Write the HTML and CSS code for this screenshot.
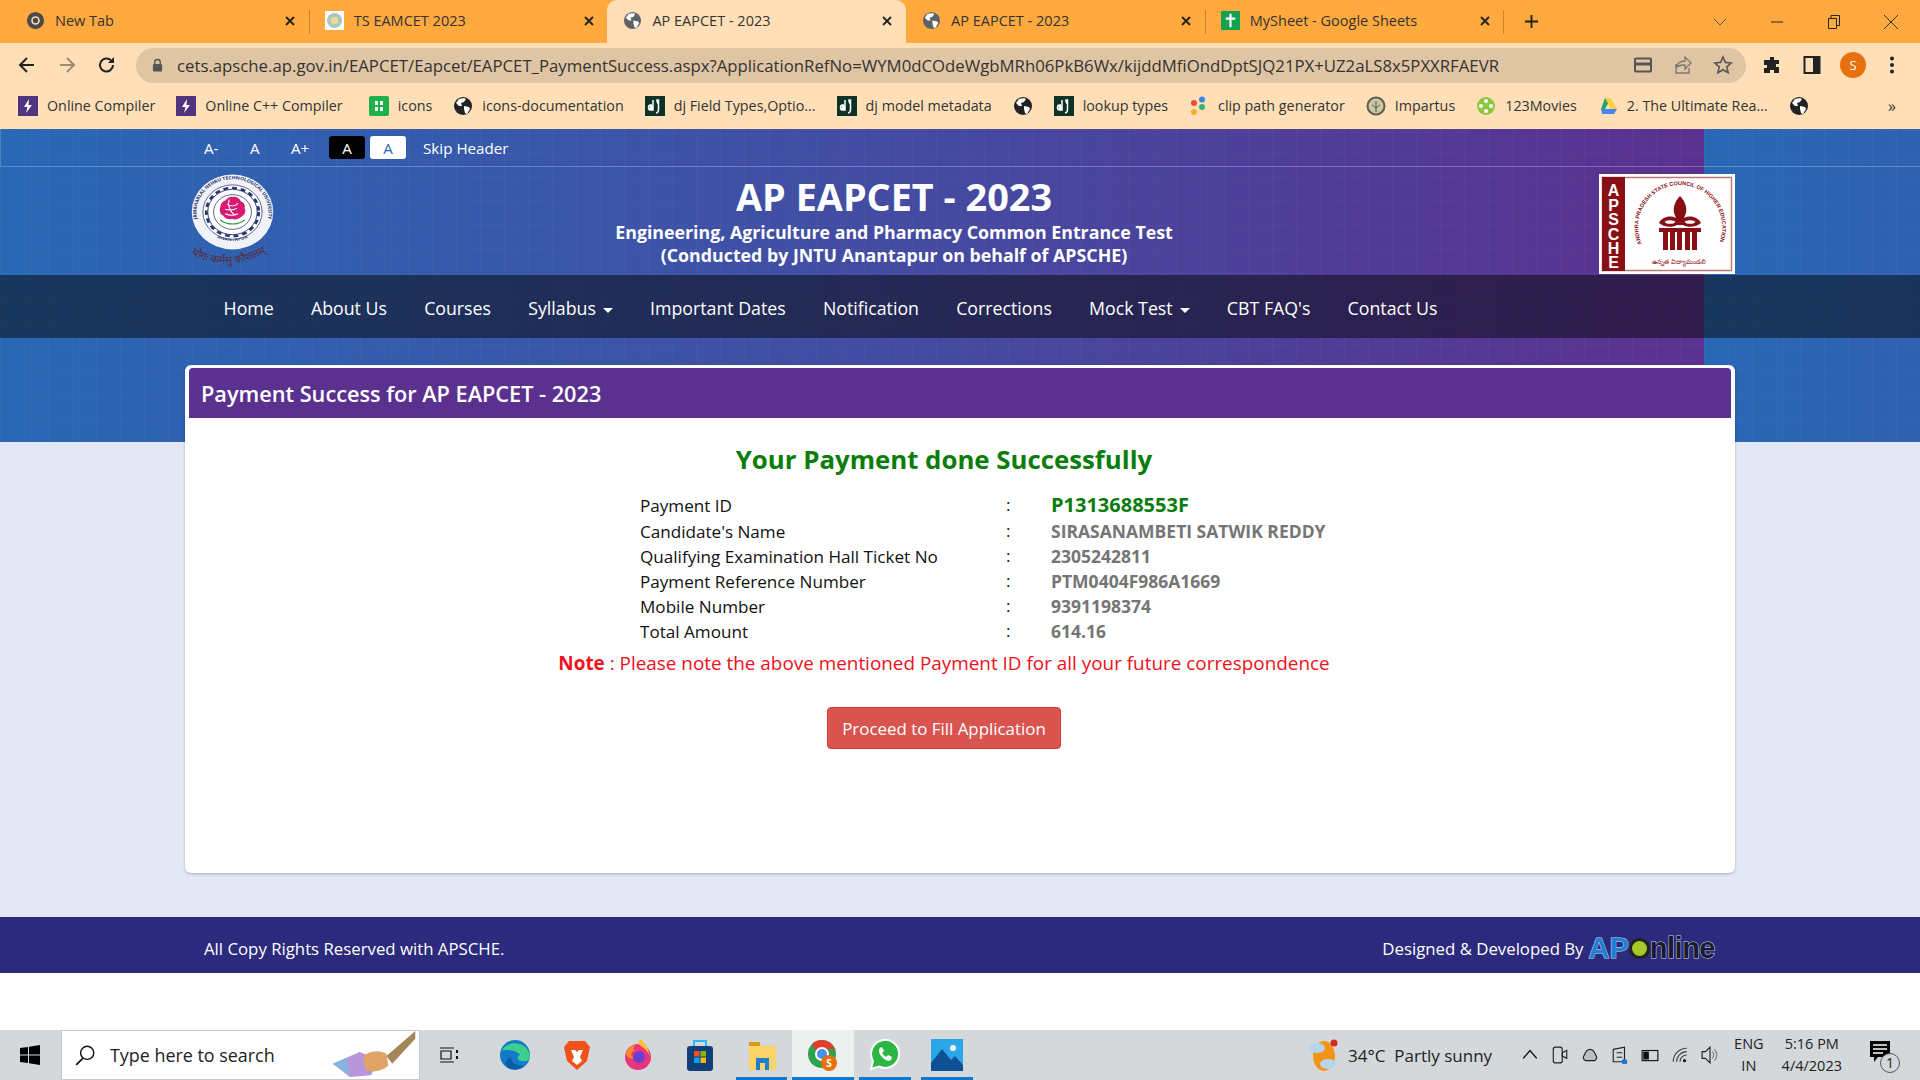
FILE: index.html
```html
<!DOCTYPE html>
<html lang="en">
<head>
    <meta charset="UTF-8">
    <title>AP EAPCET - 2023</title>
    <link rel="stylesheet" href="styles.css">
</head>
<body>
    <svg class="defs" width="0" height="0">
        <symbol id="globe" viewBox="0 0 20 20">
            <circle cx="10" cy="10" r="9" fill="currentColor"/>
            <path d="M6 3c3-1 6-1 7 0l-2 3-3 1 1 3-3 0-3-3zM11 10l5 1 1 2-3 5-2-1-1-4z" fill="#fff"/>
        </symbol>
        <symbol id="bolt" viewBox="0 0 20 20">
            <rect width="20" height="20" fill="#50357e"/>
            <path d="M11 3 6 11h3.500L8 17l6-8h-3.500z" fill="#fff"/>
        </symbol>
        <symbol id="dj" viewBox="0 0 20 20">
            <rect width="20" height="20" fill="#0c3326"/>
            <path d="M8 4v10H5.500C4 14 3.500 13 3.500 11.500S4 9 5.500 9H7M6.500 10.500h-1v2h1zM12 4h1.500v1.500H12zM12 7h1.500v7c0 1.500-.5 2.500-2.500 3" fill="none" stroke="#fff" stroke-width="1.500"/>
        </symbol>
        <symbol id="close" viewBox="0 0 12 12">
            <path d="M2 2l8 8M10 2l-8 8" stroke="#222" stroke-width="1.800" fill="none"/>
        </symbol>
    </svg>

    <div class="tabstrip">
        <div class="tab">
            <svg class="favicon" viewBox="0 0 20 20"><circle cx="10" cy="10" r="9" fill="#4a4a4a"/><circle cx="10" cy="10" r="4.500" fill="#ffdfb8"/><circle cx="10" cy="10" r="2.800" fill="#4a4a4a"/></svg>
            <span class="tab-title">New Tab</span>
            <svg class="tab-close"><use href="#close"/></svg>
        </div>
        <div class="tab tab-sep">
            <svg class="favicon" viewBox="0 0 20 20"><rect width="20" height="20" fill="#fff"/><circle cx="10" cy="10" r="8" fill="#a9c9b8"/><circle cx="10" cy="10" r="4" fill="#e8d9a0"/></svg>
            <span class="tab-title">TS EAMCET 2023</span>
            <svg class="tab-close"><use href="#close"/></svg>
        </div>
        <div class="tab tab-active">
            <svg class="favicon globe-grey"><use href="#globe"/></svg>
            <span class="tab-title">AP EAPCET - 2023</span>
            <svg class="tab-close"><use href="#close"/></svg>
        </div>
        <div class="tab">
            <svg class="favicon globe-grey"><use href="#globe"/></svg>
            <span class="tab-title">AP EAPCET - 2023</span>
            <svg class="tab-close"><use href="#close"/></svg>
        </div>
        <div class="tab tab-sep tab-end">
            <svg class="favicon" viewBox="0 0 20 20"><rect width="20" height="20" rx="1" fill="#12a150"/><path d="M10 3v14M5 8h10" stroke="#fff" stroke-width="2.200"/></svg>
            <span class="tab-title">MySheet - Google Sheets</span>
            <svg class="tab-close"><use href="#close"/></svg>
        </div>
        <svg class="new-tab" viewBox="0 0 16 16"><path d="M8 1v14M1 8h14" stroke="#222" stroke-width="2"/></svg>
        <div class="win-controls">
            <svg class="win-btn win-chevron" viewBox="0 0 14 14"><path d="M1 4l6 6 6-6" fill="none" stroke="#555"/></svg>
            <svg class="win-btn win-min" viewBox="0 0 14 14"><path d="M1 7h12" stroke="#222"/></svg>
            <svg class="win-btn win-max" viewBox="0 0 14 14"><path d="M1.500 3.500h8v10h-8zM4 3.500V.5h8.500v10H9.500" fill="none" stroke="#222"/></svg>
            <svg class="win-btn win-x" viewBox="0 0 14 14"><path d="M0 0l14 14M14 0L0 14" stroke="#333"/></svg>
        </div>
    </div>

    <div class="toolbar">
        <svg class="nav-icon" viewBox="0 0 20 20"><path d="M17 10H4M10 3l-7 7 7 7" fill="none" stroke="#222" stroke-width="2"/></svg>
        <svg class="nav-icon" viewBox="0 0 20 20"><path d="M3 10h13M10 3l7 7-7 7" fill="none" stroke="#9a8a76" stroke-width="2"/></svg>
        <svg class="nav-icon" viewBox="0 0 20 20"><path d="M16 10a6.500 6.500 0 1 1-2-4.700" fill="none" stroke="#222" stroke-width="2"/><path d="M17 2v6h-6z" fill="#222"/></svg>
        <div class="omnibox">
            <svg class="lock" viewBox="0 0 12 14"><path d="M3 6V4a3 3 0 0 1 6 0v2" fill="none" stroke="#555" stroke-width="1.500"/><rect x="1" y="6" width="10" height="8" rx="1" fill="#555"/></svg>
            <span class="url">cets.apsche.ap.gov.in/EAPCET/Eapcet/EAPCET_PaymentSuccess.aspx?ApplicationRefNo=WYM0dCOdeWgbMRh06PkB6Wx/kijddMfiOndDptSJQ21PX+UZ2aLS8x5PXXRFAEVR</span>
            <svg class="omni-icon" viewBox="0 0 20 20"><rect x="2" y="3.500" width="16" height="13" rx="1" fill="none" stroke="#555" stroke-width="2"/><path d="M2 9h16" stroke="#555" stroke-width="3"/></svg>
            <svg class="omni-icon" viewBox="0 0 20 20"><path d="M3 9v9h13v-5M3 13c1-5 5-7 9-7V2l6 6-6 6v-4c-4 0-7 0-9 3z" fill="none" stroke="#777" stroke-width="1.300"/></svg>
            <svg class="omni-icon" viewBox="0 0 20 20"><path d="M10 2l2.400 5.400 5.800.6-4.400 3.900 1.300 5.800-5.100-3-5.100 3 1.300-5.800L1.800 8l5.800-.6z" fill="none" stroke="#555" stroke-width="1.600"/></svg>
        </div>
        <svg class="tool-icon" viewBox="0 0 20 20"><path d="M8 2h4v3h5v4h-3v3h3v6h-5v-3H8v3H2v-5h3v-3H2V5h6z" fill="#222"/></svg>
        <svg class="tool-icon" viewBox="0 0 20 20"><rect x="2.500" y="2" width="15" height="16" fill="none" stroke="#222" stroke-width="2"/><rect x="11" y="2" width="7" height="16" fill="#222"/></svg>
        <span class="avatar">S</span>
        <svg class="tool-icon tool-menu" viewBox="0 0 20 20"><circle cx="10" cy="3.500" r="2" fill="#222"/><circle cx="10" cy="10" r="2" fill="#222"/><circle cx="10" cy="16.500" r="2" fill="#222"/></svg>
    </div>

    <div class="bookmarks">
        <span class="bm"><svg class="bm-icon"><use href="#bolt"/></svg>Online Compiler</span>
        <span class="bm bm-wide"><svg class="bm-icon"><use href="#bolt"/></svg>Online C++ Compiler</span>
        <span class="bm"><svg class="bm-icon" viewBox="0 0 20 20"><rect width="20" height="20" rx="2" fill="#1eb04a"/><path d="M6 5h3v4H6zM11 5h3v4h-3zM6 11h3v4H6zM11 11h3v4h-3z" fill="#fff"/></svg>icons</span>
        <span class="bm"><svg class="bm-icon"><use href="#globe"/></svg>icons-documentation</span>
        <span class="bm"><svg class="bm-icon"><use href="#dj"/></svg>dj Field Types,Optio...</span>
        <span class="bm"><svg class="bm-icon"><use href="#dj"/></svg>dj model metadata</span>
        <span class="bm bm-only"><svg class="bm-icon"><use href="#globe"/></svg></span>
        <span class="bm"><svg class="bm-icon"><use href="#dj"/></svg>lookup types</span>
        <span class="bm"><svg class="bm-icon" viewBox="0 0 20 20"><circle cx="13" cy="3.500" r="3" fill="#3a86e0"/><circle cx="5" cy="7" r="3" fill="#e8503a"/><circle cx="13" cy="11" r="3" fill="#37b26c"/><circle cx="5" cy="16" r="3" fill="#f4b12e"/></svg>clip path generator</span>
        <span class="bm"><svg class="bm-icon" viewBox="0 0 20 20"><circle cx="10" cy="10" r="8.500" fill="#c9c7a8" stroke="#5d5d45" stroke-width="2"/><path d="M10 5v11M6 9l4 3 4-3" stroke="#5d5d45" fill="none"/></svg>Impartus</span>
        <span class="bm"><svg class="bm-icon" viewBox="0 0 20 20"><circle cx="10" cy="10" r="9" fill="#8dc63f"/><circle cx="10" cy="5" r="2" fill="#fff"/><circle cx="10" cy="15" r="2" fill="#fff"/><circle cx="5" cy="10" r="2" fill="#fff"/><circle cx="15" cy="10" r="2" fill="#fff"/></svg>123Movies</span>
        <span class="bm"><svg class="bm-icon" viewBox="0 0 20 20"><path d="M7 2h6l-6 11-4 0z" fill="#1fa463"/><path d="M13 2l6 11h-6L7 2z" fill="#ffcf3f"/><path d="M19 13l-3 5H4l-1-5z" fill="#4285f4"/></svg>2. The Ultimate Rea...</span>
        <span class="bm bm-only"><svg class="bm-icon"><use href="#globe"/></svg></span>
        <span class="bm-more">»</span>
    </div>

    <div class="page">
        <div class="site">
            <div class="access-bar">
                <a class="access-item">A-</a>
                <a class="access-item">A</a>
                <a class="access-item">A+</a>
                <a class="access-box box-dark">A</a>
                <a class="access-box box-light">A</a>
                <a class="access-skip">Skip Header</a>
            </div>
            <header class="site-header">
                <svg class="jntu-logo" viewBox="0 0 85 102">
                    <defs>
                        <path id="seal-top" d="M16 68A37 37 0 1 1 69 68"/>
                        <path id="seal-bottom" d="M17 64A36 36 0 0 0 68 64"/>
                        <path id="seal-motto" d="M1 80q40 22 83-6"/>
                    </defs>
                    <g transform="translate(42.500 38) scale(.97 .89) translate(-42.500 -42)">
                        <circle cx="42.500" cy="42" r="42" fill="#f1f3f8"/>
                        <text class="seal-text"><textPath href="#seal-top" startOffset="50%" text-anchor="middle">JAWAHARLAL NEHRU TECHNOLOGICAL UNIVERSITY</textPath></text>
                        <text class="seal-text"><textPath href="#seal-bottom" startOffset="50%" text-anchor="middle">ANANTAPUR</textPath></text>
                        <circle cx="42.500" cy="42" r="30.500" fill="#fff" stroke="#26366e" stroke-width=".8"/>
                        <circle cx="42.500" cy="42" r="27" fill="none" stroke="#26366e" stroke-width="3" stroke-dasharray="5 4"/>
                        <circle cx="42.500" cy="42" r="25.500" fill="#fff" stroke="#26366e" stroke-width="1"/>
                        <circle cx="42.500" cy="42" r="19.500" fill="#fff" stroke="#26366e" stroke-width=".8"/>
                        <path d="M42 25c4-1 8 1 9 5 3 1 5 4 4 8 2 3 0 7-3 9-3 3-6 4-10 3-4 1-8-1-9-4-4-2-4-6-3-10 0-3 2-6 5-7 2-2 4-4 7-4z" fill="#d81b72"/>
                        <path d="M37 33c3 3 9 3 11-1M39 28c-2 6 1 13 5 17M47 38c-3 2-8 2-12 1M35 44c4 2 9 2 13 0" fill="none" stroke="#fff" stroke-width="1.100"/>
                        <path d="M30 51c7 6 18 6 25 0" fill="none" stroke="#2f9a4a" stroke-width="1.300"/>
                    </g>
                    <text class="seal-motto"><textPath href="#seal-motto">योगः कर्मसु कौशलम्</textPath></text>
                </svg>
                <div class="site-title">
                    <h1>AP EAPCET - 2023</h1>
                    <p>Engineering, Agriculture and Pharmacy Common Entrance Test</p>
                    <p>(Conducted by JNTU Anantapur on behalf of APSCHE)</p>
                </div>
                <svg class="apsche-logo" viewBox="0 0 136 100">
                    <defs>
                        <path id="council-arc" d="M49 80A42 42 0 1 1 115 78"/>
                    </defs>
                    <rect width="136" height="100" fill="#fff"/>
                    <rect x="3.500" y="3.500" width="129" height="93" fill="none" stroke="#b57d7d" stroke-width="1.500"/>
                    <rect x="3" y="3" width="23" height="94" fill="#8a0f14"/>
                    <text class="apsche-side" x="14.500" y="22">A</text>
                    <text class="apsche-side" x="14.500" y="37">P</text>
                    <text class="apsche-side" x="14.500" y="51">S</text>
                    <text class="apsche-side" x="14.500" y="66">C</text>
                    <text class="apsche-side" x="14.500" y="80">H</text>
                    <text class="apsche-side" x="14.500" y="94">E</text>
                    <text class="apsche-arc"><textPath href="#council-arc" startOffset="50%" text-anchor="middle">ANDHRA PRADESH STATE COUNCIL OF HIGHER EDUCATION</textPath></text>
                    <path d="M81 22c5 5 7 11 6 17l-2 5c6-3 14-1 17 5-4 4-13 5-18 2h-6c-5 3-14 2-18-2 3-6 11-8 17-5l-2-5c-1-6 1-12 6-17z" fill="#8a0f14"/>
                    <ellipse cx="71" cy="48" rx="5" ry="1.800" fill="#fff"/>
                    <ellipse cx="91" cy="48" rx="5" ry="1.800" fill="#fff"/>
                    <path d="M60 54h42v4h-4v18h-5V58h-2v18h-5V58h-3v18h-5V58h-2v18h-5V58h-2v18h-5V58h-4z" fill="#8a0f14"/>
                    <text class="apsche-telugu" x="80" y="90">ఉన్నత విద్యామండలి</text>
                </svg>
            </header>
            <nav class="site-nav">
                <a>Home</a>
                <a>About Us</a>
                <a>Courses</a>
                <a class="caret">Syllabus</a>
                <a>Important Dates</a>
                <a>Notification</a>
                <a>Corrections</a>
                <a class="caret">Mock Test</a>
                <a>CBT FAQ's</a>
                <a>Contact Us</a>
            </nav>
            <section class="card">
                <div class="card-head">Payment Success for AP EAPCET - 2023</div>
                <div class="card-body">
                    <h2>Your Payment done Successfully</h2>
                    <table class="details">
                        <tr class="row-first"><td>Payment ID</td><td>:</td><td class="val-id">P1313688553F</td></tr>
                        <tr><td>Candidate's Name</td><td>:</td><td class="val">SIRASANAMBETI SATWIK REDDY</td></tr>
                        <tr><td>Qualifying Examination Hall Ticket No</td><td>:</td><td class="val">2305242811</td></tr>
                        <tr><td>Payment Reference Number</td><td>:</td><td class="val">PTM0404F986A1669</td></tr>
                        <tr><td>Mobile Number</td><td>:</td><td class="val">9391198374</td></tr>
                        <tr><td>Total Amount</td><td>:</td><td class="val">614.16</td></tr>
                    </table>
                    <p class="note"><b>Note</b> : Please note the above mentioned Payment ID for all your future correspondence</p>
                    <button class="btn-proceed">Proceed to Fill Application</button>
                </div>
            </section>
            <footer class="site-footer">
                <span>All Copy Rights Reserved with APSCHE.</span>
                <span class="footer-right">Designed &amp; Developed By <span class="aponline">AP<i class="ap-dot"></i><em>nline</em></span></span>
            </footer>
        </div>
    </div>

    <div class="taskbar">
        <svg class="win-logo" viewBox="0 0 20 20"><path d="M0 3l8-1v7.500H0zM9 1.800 20 0v9.500H9zM0 10.500h8V18l-8-1zM9 10.500h11V20L9 18.200z" fill="#000"/></svg>
        <div class="search-box">
            <svg class="search-icon" viewBox="0 0 20 20"><circle cx="12" cy="8" r="6" fill="none" stroke="#111" stroke-width="1.300"/><path d="M8 13l-6 6" stroke="#111" stroke-width="1.500"/></svg>
            <span>Type here to search</span>
            <svg class="brush" viewBox="0 0 90 50"><path d="M2 34l28-12 20 8-8 16-22 2z" fill="#a77ad0" opacity=".8"/><path d="M2 34l14-6 4 18z" fill="#6fc2e0" opacity=".7"/><path d="M34 26c8-6 18-6 24-2l2 12c-6 6-18 8-24 4z" fill="#e0a468"/><path d="M58 26 88 0v8L64 34z" fill="#a58658"/></svg>
        </div>
        <svg class="task-view" viewBox="0 0 20 20"><path d="M1 3h14M1 17h14M2 6h10v8H2z" fill="none" stroke="#111" stroke-width="1.200"/><path d="M17 5h2v3h-2zM17 11h2v3h-2z" fill="#111"/></svg>
        <div class="task-app"><svg class="task-icon" viewBox="0 0 32 32"><circle cx="16" cy="16" r="15" fill="#1379c9"/><path d="M3 12C6 2 28 0 31 17c0 5-5 6-9 5-5-1-4-5-1-6-4-5-14-6-18-4z" fill="#3ccf8e"/><path d="M12 18c0 6 5 9 12 9-4 4-13 5-18-2 1-4 3-6 6-7z" fill="#0c59a4"/></svg></div>
        <div class="task-app"><svg class="task-icon" viewBox="0 0 32 32"><path d="M8 2h16l5 6-3 14-10 9-10-9L3 8z" fill="#f1511b"/><path d="M10 11h4l2 2 2-2h4l-3 7 2 4-5 4-5-4 2-4z" fill="#fff"/></svg></div>
        <div class="task-app"><svg class="task-icon" viewBox="0 0 32 32"><circle cx="16" cy="18" r="13" fill="#e9357a"/><path d="M16 5c5 3 12 8 12 15 0-7-5-18-10-20z" fill="#ffc02e"/><path d="M4 14c2-5 6-8 9-8-2 3-2 5 0 6-5 0-5 6 0 7-4 2-9-1-9-5z" fill="#ff8a1f"/><circle cx="17" cy="18" r="6" fill="#6b3fd1"/></svg></div>
        <div class="task-app"><svg class="task-icon" viewBox="0 0 32 32"><path d="M10 8V2h12v6" fill="none" stroke="#2db4f0" stroke-width="2"/><rect x="3" y="7" width="26" height="25" rx="3" fill="#123f7a"/><rect x="10" y="12" width="5.500" height="5.500" fill="#f25022"/><rect x="16.500" y="12" width="5.500" height="5.500" fill="#7fba00"/><rect x="10" y="18.500" width="5.500" height="5.500" fill="#00a4ef"/><rect x="16.500" y="18.500" width="5.500" height="5.500" fill="#ffb900"/></svg></div>
        <div class="task-app app-open"><svg class="task-icon" viewBox="0 0 32 32"><path d="M3 3h11v5H3z" fill="#d99a18"/><rect x="3" y="7" width="27" height="24" fill="#ffd466"/><path d="M10 31V19h13v12h-4v-7h-5v7z" fill="#1c7fd0"/></svg></div>
        <div class="task-app app-open app-active"><svg class="task-icon" viewBox="0 0 32 32"><circle cx="15" cy="15" r="14" fill="#2fa24f"/><path d="M15 1a14 14 0 0 1 13 9H15a5 5 0 0 0-5 3L5 5a14 14 0 0 1 10-4z" fill="#e33c31"/><circle cx="15" cy="15" r="6" fill="#4a8ff0" stroke="#fff" stroke-width="2"/><circle cx="22" cy="24" r="8" fill="#e8700d"/><text class="badge-s" x="22" y="28">S</text></svg></div>
        <div class="task-app app-open"><svg class="task-icon" viewBox="0 0 32 32"><path d="M2 30l2-8a14 14 0 1 1 6 5.500z" fill="#2bb741" stroke="#fff" stroke-width="2"/><path d="M11 9c-2 2-1 6 2 9s6 5 9 3l1-3-4-2-2 2c-2-1-3-3-4-4l2-2-2-4z" fill="#fff"/></svg></div>
        <div class="task-app app-open"><svg class="task-icon" viewBox="0 0 32 32"><rect width="32" height="32" fill="#2ba6e8"/><circle cx="22" cy="9" r="3" fill="#fff"/><path d="M0 24 11 10l9 11 4-4 8 9v6H0z" fill="#0f4f94"/></svg></div>
        <div class="tray">
            <svg class="weather" viewBox="0 0 30 34"><ellipse cx="15" cy="18" rx="11" ry="15" fill="#f29418"/><circle cx="25" cy="5" r="3.500" fill="#d42a20"/><ellipse cx="8" cy="10" rx="8" ry="5" fill="#b8d3ee"/><ellipse cx="19" cy="26" rx="8" ry="5" fill="#b8d3ee"/></svg>
            <span class="weather-text">34°C&nbsp; Partly sunny</span>
            <svg class="tray-icon tray-up" viewBox="0 0 16 16"><path d="M2 11l6-7 6 7" fill="none" stroke="#111" stroke-width="1.300"/></svg>
            <svg class="tray-icon" viewBox="0 0 16 16"><rect x="2" y="1" width="8" height="14" rx="2" fill="none" stroke="#222"/><path d="M10 6l4-2v7l-4-2z" fill="none" stroke="#222"/></svg>
            <svg class="tray-icon" viewBox="0 0 16 16"><path d="M4 13a3 3 0 0 1-1-5c1-3 3-5 5-5s4 2 5 5a3 3 0 0 1-1 5z" fill="#bdbdbd" stroke="#222"/></svg>
            <svg class="tray-icon" viewBox="0 0 16 16"><path d="M2 3l10-2v13H2z" fill="none" stroke="#222"/><path d="M5 6h5M5 10h5" stroke="#222"/><circle cx="12" cy="14" r="2.500" fill="#2478c9"/></svg>
            <svg class="tray-icon" viewBox="0 0 16 16"><rect x="1" y="4" width="14" height="9" fill="none" stroke="#111"/><rect x="2" y="5" width="5" height="7" fill="#111"/></svg>
            <svg class="tray-icon" viewBox="0 0 16 16"><path d="M2 14a12 12 0 0 1 12-12M5 14a9 9 0 0 1 9-9M8 14a6 6 0 0 1 6-6" fill="none" stroke="#444"/><circle cx="12" cy="13" r="1.500" fill="#222"/></svg>
            <svg class="tray-icon" viewBox="0 0 16 16"><path d="M1 5h3l4-4v14l-4-4H1z" fill="none" stroke="#222"/><path d="M10 5a4 4 0 0 1 0 6M12 3a7 7 0 0 1 0 10" fill="none" stroke="#777"/></svg>
            <div class="tray-lang"><span>ENG</span><span>IN</span></div>
            <div class="tray-clock"><span>5:16 PM</span><span>4/4/2023</span></div>
            <div class="notify">
                <svg class="notify-icon" viewBox="0 0 20 22"><path d="M0 0h20v16H8l-4 5v-5H0z" fill="#000"/><path d="M3 4h14M3 8h14M3 12h10" stroke="#fff" stroke-width="1.300"/></svg>
                <span class="notify-count">1</span>
            </div>
        </div>
    </div>
</body>
</html>
```

FILE: styles.css
```css
* {
    box-sizing: border-box;
}
html, body {
    margin: 0;
    height: 100%;
}
body {
    width: 1920px;
    height: 1080px;
    overflow: hidden;
    display: flex;
    flex-direction: column;
    font-family: "Open Sans", "Noto Sans", sans-serif;
    background: #fff;
}
.defs {
    display: none;
}
svg {
    flex: none;
    display: block;
}

/* browser chrome */
.tabstrip {
    height: 43px;
    background: #ffa93f;
    display: flex;
    align-items: center;
    padding-left: 10px;
    font-size: 14.500px;
    color: #333;
}
.tab {
    width: 298.700px;
    height: 43px;
    padding: 0 12.700px 2px 16px;
    display: flex;
    align-items: center;
    position: relative;
}
.tab-sep::before, .tab-end::after {
    content: "";
    position: absolute;
    left: 0;
    top: 10px;
    height: 24px;
    width: 1px;
    background: #c98328;
}
.tab-end::after {
    left: auto;
    right: -1px;
}
.tab-active {
    background: #ffdfb8;
    border-radius: 10px 10px 0 0;
}
.favicon {
    width: 19px;
    height: 19px;
    margin-right: 10px;
}
.globe-grey {
    color: #5f6368;
}
.tab-title {
    flex: 1;
    white-space: nowrap;
}
.tab-close {
    width: 12px;
    height: 12px;
}
.new-tab {
    width: 15px;
    height: 15px;
    margin-left: 21px;
}
.win-controls {
    margin-left: auto;
    display: flex;
    align-items: center;
    padding-right: 22px;
}
.win-btn {
    width: 14px;
    height: 14px;
}
.win-chevron {
    margin-right: 43px;
}
.win-min {
    margin-right: 43px;
}
.win-max {
    margin-right: 43px;
}

.toolbar {
    height: 44px;
    background: #ffdfb8;
    display: flex;
    align-items: center;
    padding-left: 17px;
    gap: 20px;
}
.nav-icon {
    width: 20px;
    height: 20px;
}
.omnibox {
    width: 1610px;
    height: 35px;
    margin-left: -1px;
    margin-right: -4px;
    border-radius: 18px;
    background: #dfc5a3;
    display: flex;
    align-items: center;
    padding: 0 13px 0 16px;
    color: #333;
}
.lock {
    width: 11px;
    height: 14px;
    margin-right: 14px;
}
.url {
    flex: 1;
    font-size: 16.750px;
    white-space: nowrap;
}
.omni-icon {
    width: 20px;
    height: 20px;
    margin-left: 20px;
}
.tool-icon {
    width: 20px;
    height: 20px;
}
.avatar {
    width: 26px;
    height: 26px;
    border-radius: 50%;
    background: #e8700d;
    color: #fff;
    font-size: 13px;
    display: flex;
    align-items: center;
    justify-content: center;
    margin: 0 -2px;
}
.tool-menu {
    margin-left: -2px;
}

.bookmarks {
    height: 42px;
    background: #ffdfb8;
    display: flex;
    align-items: center;
    padding: 0 0 5px 18px;
    gap: 21px;
    font-size: 14.300px;
    color: #333;
    white-space: nowrap;
}
.bm {
    display: flex;
    align-items: center;
}
.bm-wide {
    margin-right: 5px;
}
.bm-icon {
    width: 20px;
    height: 20px;
    margin-right: 9px;
    color: #222;
}
.bm-only .bm-icon {
    margin-right: 0;
}
.bm-more {
    margin-left: auto;
    padding-right: 24px;
    font-size: 16px;
}

/* page */
.page {
    flex: 1;
    background: #fff;
}
.site {
    height: 844px;
    background-color: #e4e7f5;
    background-image:
        repeating-linear-gradient(90deg, rgba(255,255,255,.025) 0 1px, transparent 1px 24px),
        repeating-linear-gradient(0deg, rgba(255,255,255,.025) 0 1px, transparent 1px 24px),
        linear-gradient(90deg, #2968b5, #5b3190);
    background-size: 1704px 313px;
    background-repeat: repeat-x;
    color: #fff;
}
.access-bar {
    height: 38px;
    padding: 0 0 0 203px;
    display: flex;
    align-items: center;
    border-bottom: 1px solid rgba(255,255,255,.25);
    border-left: 1px solid rgba(255,255,255,.15);
    font-size: 15.200px;
}
.access-item {
    width: 46px;
}
.access-item:nth-child(2) {
    width: 41px;
}
.access-item:nth-child(3) {
    width: 38px;
}
.access-box {
    width: 36px;
    height: 23px;
    border-radius: 3px;
    display: flex;
    align-items: center;
    justify-content: center;
    margin-right: 5px;
}
.box-dark {
    background: #000;
}
.box-light {
    background: #fff;
    color: #2968b5;
}
.access-skip {
    margin-left: 12px;
}
.site-header {
    width: 1550px;
    height: 108px;
    margin: 0 auto;
    display: grid;
    grid-template-columns: 90px 1fr 136px;
    align-items: start;
    padding-top: 7px;
}
.jntu-logo {
    width: 85px;
    height: 102px;
    margin-left: 5px;
}
.seal-text {
    font-size: 5.200px;
    font-weight: 700;
    fill: #26366e;
}
.seal-motto {
    font-size: 11px;
    fill: #5a2a3a;
}
.site-title {
    text-align: center;
    padding-right: 86px;
}
.site-title h1 {
    margin: -1px 0 1px;
    font-size: 37.800px;
    line-height: 47px;
    font-weight: 700;
}
.site-title p {
    margin: 0;
    font-size: 17.800px;
    line-height: 23px;
    font-weight: 700;
}
.apsche-logo {
    width: 136px;
    height: 100px;
}
.apsche-side {
    font-family: "Liberation Sans", sans-serif;
    font-size: 16px;
    font-weight: 700;
    fill: #fff;
    text-anchor: middle;
}
.apsche-arc {
    font-family: "Liberation Sans", sans-serif;
    font-size: 5.500px;
    font-weight: 700;
    fill: #8a0f14;
}
.apsche-telugu {
    font-size: 6.500px;
    fill: #8a0f14;
    text-anchor: middle;
}
.site-nav {
    height: 63px;
    background: rgba(5,6,7,.5);
    padding: 3px 0 0 205px;
    display: flex;
    align-items: center;
    font-size: 17.750px;
}
.site-nav a {
    padding: 0 18.600px;
    white-space: nowrap;
}
.caret::after {
    content: "";
    display: inline-block;
    margin-left: 7px;
    vertical-align: middle;
    border-top: 5px solid #fff;
    border-left: 5px solid transparent;
    border-right: 5px solid transparent;
}
.card {
    width: 1550px;
    height: 508px;
    margin: 27px auto 44px;
    background: #fff;
    border-radius: 6px;
    padding: 3px 4px 0;
    box-shadow: 0 1px 3px rgba(0,0,0,.25);
    color: #111;
}
.card-head {
    height: 50px;
    background: #5b3190;
    border-radius: 4px 4px 0 0;
    color: #fff;
    font-size: 21.700px;
    font-weight: 600;
    line-height: 51px;
    padding-left: 12px;
}
.card-body {
    padding-right: 32px;
    text-align: center;
}
.card-body h2 {
    margin: 23px 0 14px;
    font-size: 25.800px;
    line-height: 36px;
    font-weight: 700;
    color: #0a7d0a;
}
.details {
    border-collapse: collapse;
    margin-left: 451px;
    text-align: left;
    font-size: 17.100px;
    font-weight: 500;
}
.details td {
    padding: 0;
    height: 25px;
    white-space: nowrap;
}
.details td:nth-child(1) {
    width: 366px;
    padding-top: 1px;
}
.details td:nth-child(2) {
    width: 45px;
}
.row-first td {
    height: 27px;
}
.val {
    font-weight: 700;
    font-size: 17.500px;
    color: #757575;
}
.val-id {
    font-weight: 700;
    color: #0a7d0a;
    font-size: 20px;
}
.note {
    margin: 7px 0 31px;
    font-size: 18.900px;
    line-height: 26px;
    color: #f01020;
}
.btn-proceed {
    width: 234px;
    height: 42px;
    border: 1px solid #d43f3a;
    border-radius: 4px;
    background: #d9534f;
    color: #fff;
    font-family: inherit;
    font-size: 16.900px;
    padding: 0;
}
.site-footer {
    height: 56px;
    background: #2c2a7c;
    padding: 6px 205px 0 204px;
    display: flex;
    align-items: center;
    justify-content: space-between;
    font-size: 16.800px;
}
.footer-right {
    display: flex;
    align-items: center;
    gap: 5px;
}
.aponline {
    font-family: "Liberation Sans", sans-serif;
    font-size: 29px;
    line-height: 30px;
    font-weight: 700;
    color: #1f7fd6;
    display: flex;
    align-items: center;
    -webkit-text-stroke: 1px #c8d8e8;
    paint-order: stroke fill;
}
.aponline em {
    font-style: normal;
    color: #1a1a2e;
    letter-spacing: -.5px;
}
.ap-dot {
    width: 21px;
    height: 21px;
    border-radius: 50%;
    background: #a5c928;
    border: 3px solid #222;
}

/* windows taskbar */
.taskbar {
    height: 50px;
    background: #d4d8da;
    display: flex;
    align-items: center;
    font-size: 18px;
    color: #222;
}
.win-logo {
    width: 20px;
    height: 20px;
    margin: 0 21px 0 20px;
}
.search-box {
    width: 359px;
    height: 50px;
    background: #fff;
    border: 1px solid #c9c9c9;
    display: flex;
    align-items: center;
    padding-left: 12px;
    position: relative;
    font-size: 17.900px;
}
.search-icon {
    width: 22px;
    height: 22px;
    margin-right: 14px;
}
.brush {
    position: absolute;
    right: 0;
    top: 0;
    width: 90px;
    height: 48px;
}
.task-view {
    width: 20px;
    height: 20px;
    margin: 0 25px 0 19px;
}
.task-app {
    width: 61.700px;
    height: 50px;
    display: flex;
    align-items: center;
    justify-content: center;
    position: relative;
}
.task-icon {
    width: 32px;
    height: 32px;
}
.app-open::after {
    content: "";
    position: absolute;
    left: 5px;
    right: 5px;
    bottom: 0;
    height: 3px;
    background: #0b79d0;
}
.app-active {
    background: #eef0f0;
}
.app-active::after {
    left: 0;
    right: 0;
}
.badge-s {
    font-size: 10px;
    font-weight: 700;
    fill: #fff;
    text-anchor: middle;
}
.tray {
    margin-left: auto;
    display: flex;
    align-items: center;
    height: 50px;
    padding-right: 20px;
}
.weather {
    width: 30px;
    height: 34px;
    margin-right: 9px;
}
.weather-text {
    font-size: 17px;
    margin-right: 29px;
    white-space: nowrap;
}
.tray-icon {
    width: 18px;
    height: 18px;
    margin-right: 12px;
}
.tray-lang, .tray-clock {
    display: flex;
    flex-direction: column;
    align-items: center;
    font-size: 14.500px;
    line-height: 22px;
}
.tray-lang {
    margin: 0 18px 0 3px;
}
.tray-clock {
    margin-right: 28px;
}
.notify {
    width: 30px;
    height: 36px;
    position: relative;
}
.notify-icon {
    width: 20px;
    height: 22px;
    margin-top: 4px;
}
.notify-count {
    position: absolute;
    right: 0;
    bottom: 0;
    width: 20px;
    height: 20px;
    border-radius: 50%;
    border: 1px solid #555;
    background: #d4d8da;
    font-size: 14px;
    line-height: 18px;
    text-align: center;
}
```
